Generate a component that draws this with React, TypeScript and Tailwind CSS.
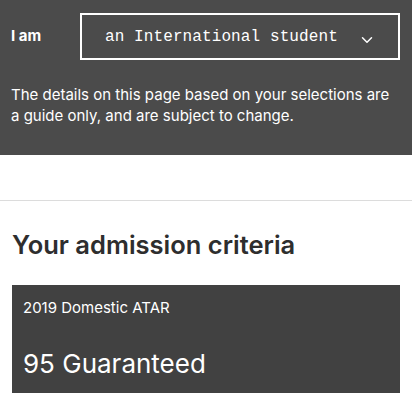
import { ChevronDown } from "lucide-react";

const sans = "font-['Inter','Liberation_Sans',sans-serif]";

export default function App() {
  return (
    <div className={`w-[412px] bg-white ${sans}`}>
      <section className="bg-[#4b4b4b] px-[11px] pt-[13px] h-[155px] text-white">
        <div className="flex items-center">
          <span className="w-[69px] text-[15px] font-bold">I am</span>
          <button className="flex h-[47px] w-[320px] items-center border-2 border-white pl-[23px] pr-[22px] text-white">
            <span className="flex-1 text-left font-['Liberation_Mono',monospace] text-[16px] tracking-[0.1px]">
              an International student
            </span>
            <ChevronDown className="mt-[7px] ml-[2px] h-[18px] w-[18px]" strokeWidth={2} />
          </button>
        </div>
        <p className="mt-[24px] text-[15px] leading-[21px]">
          The details on this page based on your selections are a guide only,
          and are subject to change.
        </p>
      </section>

      <div className="h-[45px]" />
      <hr className="border-t border-[#dcdcdc]" />

      <section className="px-3 pt-[29px] pb-4">
        <h2 className="text-[25.5px] font-semibold text-[#2e2e2e] leading-[30px]">
          Your admission criteria
        </h2>
        <div className="mt-[25px] h-[108px] bg-[#414141] px-[11px] pt-[13px] text-white">
          <p className="text-[15px] leading-[20px]">2019 Domestic ATAR</p>
          <p className="mt-[30px] text-[26px] leading-[32px]">95 Guaranteed</p>
        </div>
      </section>
    </div>
  );
}
